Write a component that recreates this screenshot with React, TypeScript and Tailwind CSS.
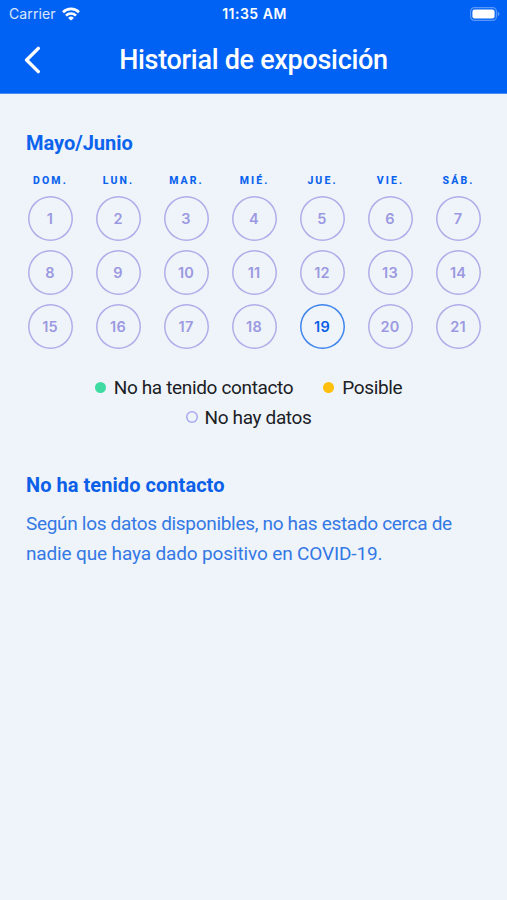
import clsx from "clsx"

const weekDays = ["DOM.", "LUN.", "MAR.", "MIÉ.", "JUE.", "VIE.", "SÁB."]
const days = Array.from({ length: 21 }, (_, i) => i + 1)
const today = 19

function StatusBar() {
  return (
    <div className="grid h-[27px] grid-cols-3 items-center pl-[9px] pr-[7px] font-['Inter',sans-serif] leading-none text-white">
      <div className="flex items-center gap-[6px]">
        <span className="text-[14px] tracking-[0.1px] text-white/85">Carrier</span>
        <svg width="18" height="14" viewBox="0 0 18 14" fill="none" stroke="white" strokeWidth="2.6">
          <path d="M1 5.2a11.4 11.4 0 0 1 16 0" />
          <path d="M4 8.6a7.1 7.1 0 0 1 10 0" />
          <path d="M9 13.6 6.1 10.9a4.1 4.1 0 0 1 5.8 0Z" fill="white" stroke="none" />
        </svg>
      </div>
      <span className="whitespace-nowrap pt-px text-center text-[14px] font-semibold tracking-[0.5px]">11:35 AM</span>
      <div className="flex justify-end">
        <svg width="30" height="14" viewBox="0 0 30 14" fill="none">
          <rect x="0.6" y="0.6" width="25.8" height="12.8" rx="3.8" stroke="white" strokeOpacity="0.35" strokeWidth="1.2" />
          <rect x="2.4" y="2.6" width="22.2" height="8.8" rx="2.2" fill="white" />
          <path d="M27.8 4.8v4.4c1-.4 1.6-1.2 1.6-2.2s-.6-1.8-1.6-2.2Z" fill="white" fillOpacity="0.4" />
        </svg>
      </div>
    </div>
  )
}

function Header() {
  return (
    <header className="h-[94px] border-b border-[#4a8cf5] bg-[#0062f5]">
      <StatusBar />
      <div className="grid h-[66px] grid-cols-[60px_1fr_60px] items-center">
        <button className="pl-6" aria-label="Volver">
          <svg width="17" height="28" viewBox="0 0 17 28" fill="none" stroke="white" strokeWidth="3.4" strokeLinecap="round" strokeLinejoin="round">
            <path d="M14.3 2.4 2.6 14l11.7 11.6" />
          </svg>
        </button>
        <h1 className="whitespace-nowrap pt-px text-center text-[27px] font-medium leading-none tracking-[-0.3px] text-white">
          Historial de exposición
        </h1>
      </div>
    </header>
  )
}

function Calendar() {
  return (
    <div className="-mr-[11px] -ml-[10px] mt-5">
      <div className="grid grid-cols-7 text-center text-[10.5px] font-extrabold leading-3 tracking-[2.1px] text-[#0b63ee]">
        {weekDays.map((day) => (
          <span key={day} className="pl-px">
            {day}
          </span>
        ))}
      </div>
      <div className="mt-[9px] grid grid-cols-7 justify-items-center gap-y-[9px] font-['Inter',sans-serif]">
        {days.map((day) => (
          <div
            key={day}
            className={clsx(
              "flex size-[45px] items-center justify-center rounded-full pt-px text-[14.5px] font-semibold tracking-[0.2px] ring-[1.5px] ring-inset",
              day === today ? "font-bold text-[#0b5fe8] ring-[#3f84ee]" : "text-[#9c99e2] ring-[#b0adea]"
            )}
          >
            {day}
          </div>
        ))}
      </div>
    </div>
  )
}

function Legend() {
  return (
    <div className="mt-6 flex flex-wrap justify-center gap-x-[30px] pr-[10px] text-[19px] leading-[29.5px] tracking-[-0.35px] text-[#1b2025]">
      <div className="flex items-center gap-[8px]">
        <span className="size-[11px] rounded-full bg-[#3fdba3]" />
        <span>No ha tenido contacto</span>
      </div>
      <div className="flex items-center gap-[8px]">
        <span className="size-[11px] rounded-full bg-[#ffbf0a]" />
        <span>Posible</span>
      </div>
      <div className="flex items-center gap-[7px]">
        <span className="size-[12px] rounded-full ring-[1.5px] ring-inset ring-[#aaa8f2]" />
        <span>No hay datos</span>
      </div>
    </div>
  )
}

export default function App() {
  return (
    <div className="min-h-screen bg-[#eef4f9] font-['Roboto',sans-serif]">
      <Header />
      <main className="px-[26px] pt-[37px]">
        <h2 className="text-[20px] font-bold leading-6 text-[#0b63ee]">Mayo/Junio</h2>
        <Calendar />
        <Legend />
        <section className="mt-[41px]">
          <h2 className="text-[20px] font-bold leading-6 tracking-[0.05px] text-[#0b5fe8]">No ha tenido contacto</h2>
          <p className="mt-3 whitespace-nowrap text-[19px] leading-[29.5px] tracking-[-0.31px] text-[#3478e5]">
            Según los datos disponibles, no has estado cerca de
            <br />
            <span className="tracking-[-0.14px]">nadie que haya dado positivo en COVID-19.</span>
          </p>
        </section>
      </main>
    </div>
  )
}
